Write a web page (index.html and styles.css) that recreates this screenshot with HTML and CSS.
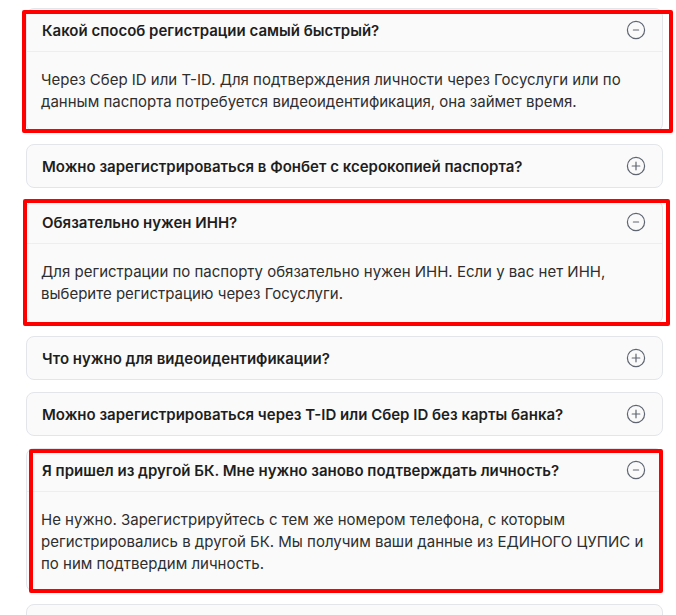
FILE: index.html
```html
<!DOCTYPE html>
<html lang="ru">
<head>
<meta charset="utf-8">
<title>FAQ</title>
<link rel="stylesheet" href="styles.css">
</head>
<body>
<div class="page">
  <div class="faq">
    <div class="item">
      <div class="q"><span class="q-text">Какой способ регистрации самый быстрый?</span><svg class="ic" viewBox="0 0 20 20"><circle cx="10" cy="10" r="8.6"/><path d="M7.4 10h5.2"/></svg></div>
      <div class="a">Через Сбер ID или T-ID. Для подтверждения личности через Госуслуги или по данным паспорта потребуется видеоидентификация, она займет время.</div>
    </div>
    <div class="item">
      <div class="q"><span class="q-text">Можно зарегистрироваться в Фонбет с ксерокопией паспорта?</span><svg class="ic" viewBox="0 0 20 20"><circle cx="10" cy="10" r="8.6"/><path d="M6.2 10h7.6M10 6.2v7.6"/></svg></div>
    </div>
    <div class="item">
      <div class="q"><span class="q-text">Обязательно нужен ИНН?</span><svg class="ic" viewBox="0 0 20 20"><circle cx="10" cy="10" r="8.6"/><path d="M7.4 10h5.2"/></svg></div>
      <div class="a">Для регистрации по паспорту обязательно нужен ИНН. Если у вас нет ИНН, выберите регистрацию через Госуслуги.</div>
    </div>
    <div class="item">
      <div class="q"><span class="q-text">Что нужно для видеоидентификации?</span><svg class="ic" viewBox="0 0 20 20"><circle cx="10" cy="10" r="8.6"/><path d="M6.2 10h7.6M10 6.2v7.6"/></svg></div>
    </div>
    <div class="item">
      <div class="q"><span class="q-text">Можно зарегистрироваться через T-ID или Сбер ID без карты банка?</span><svg class="ic" viewBox="0 0 20 20"><circle cx="10" cy="10" r="8.6"/><path d="M6.2 10h7.6M10 6.2v7.6"/></svg></div>
    </div>
    <div class="item">
      <div class="q"><span class="q-text">Я пришел из другой БК. Мне нужно заново подтверждать личность?</span><svg class="ic" viewBox="0 0 20 20"><circle cx="10" cy="10" r="8.6"/><path d="M7.4 10h5.2"/></svg></div>
      <div class="a a-last">Не нужно. Зарегистрируйтесь с тем же номером телефона, с которым регистрировались в другой БК. Мы получим ваши данные из ЕДИНОГО ЦУПИС и по ним подтвердим личность.</div>
    </div>
    <div class="item">
      <div class="q"></div>
    </div>
  </div>
  <div class="mark mark-1"></div>
  <div class="mark mark-2"></div>
  <div class="mark mark-3"></div>
</div>
</body>
</html>
```
FILE: styles.css
```css
html, body {
  margin: 0;
  padding: 0;
  background: #ffffff;
}
.page {
  position: relative;
  height: 615px;
  overflow: hidden;
  padding: 8px 13px 0 26px;
  box-sizing: border-box;
  font-family: Inter, "Noto Sans", "DejaVu Sans", sans-serif;
}
.faq {
  display: flex;
  flex-direction: column;
  gap: 12px;
}
.item {
  border: 1px solid #e2e5ea;
  border-radius: 8px;
  background: #fafafa;
}
.q {
  display: flex;
  align-items: center;
  justify-content: space-between;
  height: 42px;
  padding: 0 16px 0 15px;
}
.q-text {
  font-size: 15px;
  font-weight: 600;
  color: #1e1e1e;
  letter-spacing: 0;
}
.ic {
  width: 20px;
  height: 20px;
  flex: none;
  fill: none;
  stroke: #5f6672;
  stroke-width: 1.2;
  stroke-linecap: round;
}
.a {
  border-top: 1px solid #eceef1;
  padding: 17px 15px 18px 14px;
  font-size: 15px;
  line-height: 22px;
  color: #2e2e2e;
}
.a-last {
  padding-bottom: 16px;
}
.mark {
  position: absolute;
  box-sizing: border-box;
  border: 4px solid #ff0000;
  border-radius: 2px;
}
.mark-1 { left: 22px; top: 10px; width: 651px; height: 123px; }
.mark-2 { left: 23px; top: 199px; width: 647px; height: 127px; }
.mark-3 { left: 29px; top: 449px; width: 634px; height: 144px; }
```
